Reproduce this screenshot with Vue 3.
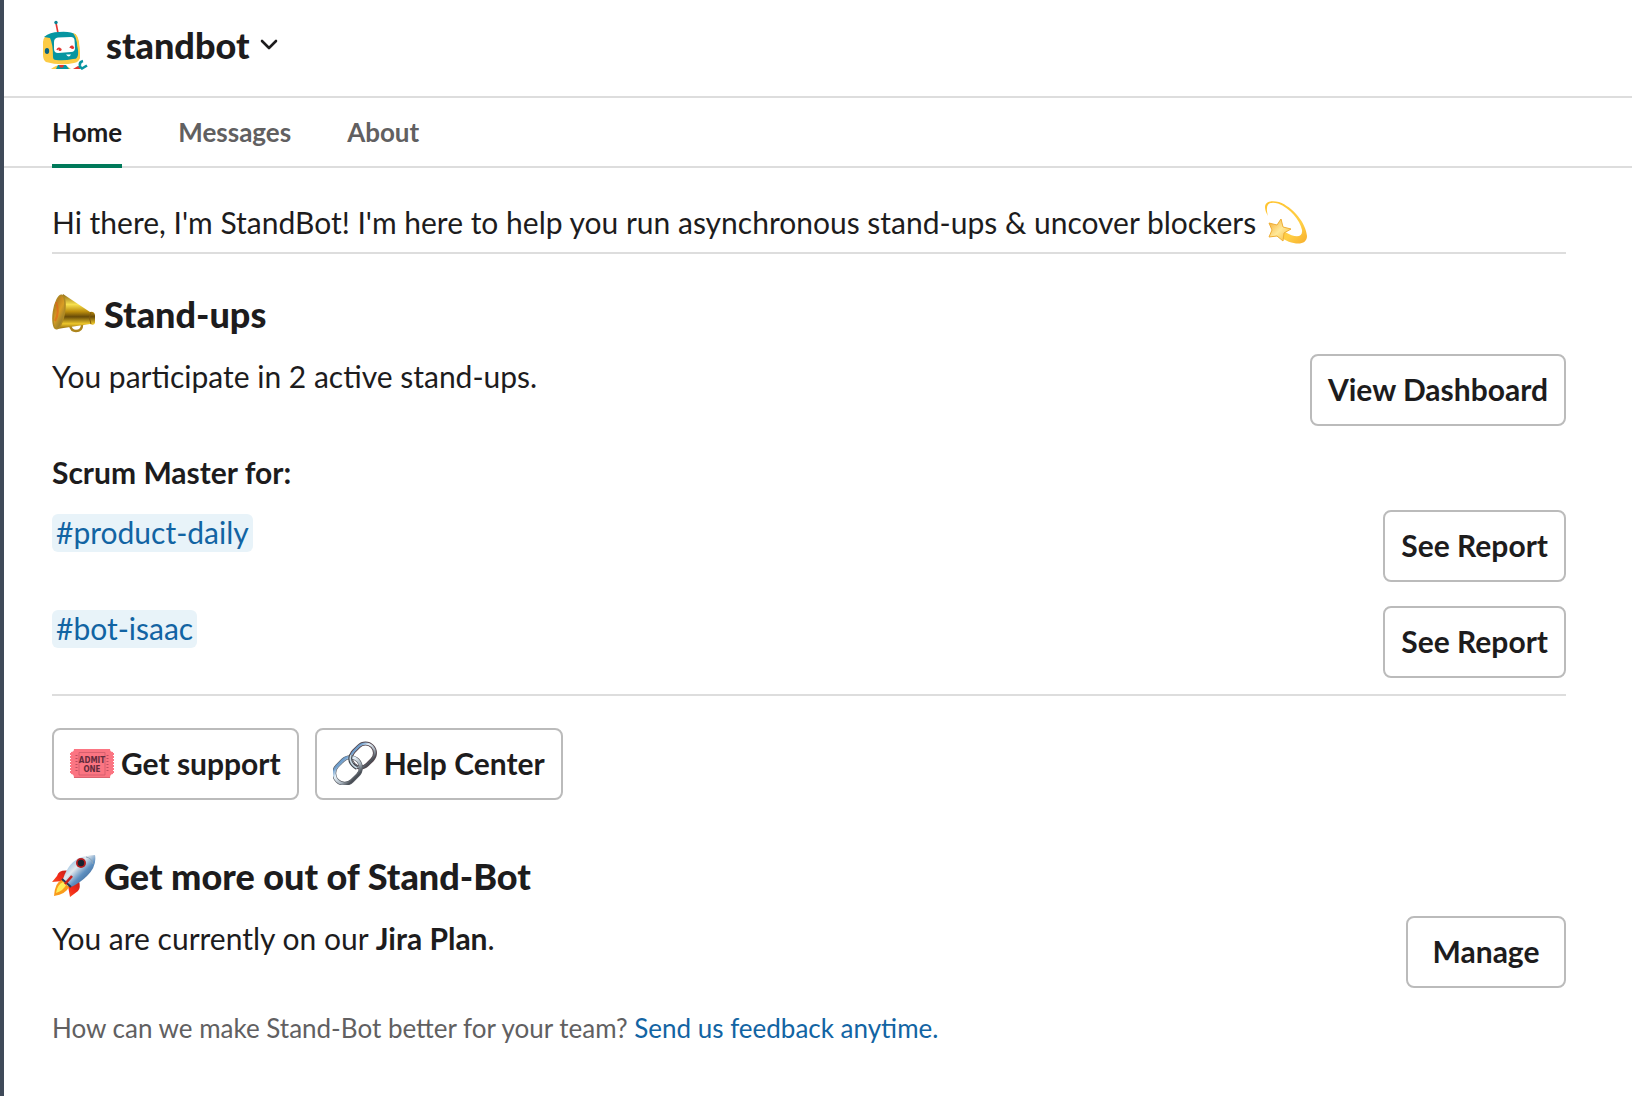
<script setup>
import { ref } from "vue";

const tabs = ['Home', 'Messages', 'About'];
const activeTab = ref('Home');
const channels = ref(['product-daily', 'bot-isaac']);
const plan = ref('Jira Plan');
</script>

<template>
    <div class="app">
        <header class="header">
            <svg class="avatar" viewBox="0 0 48 52" aria-hidden="true">
                <path d="M14 4 L16 14" stroke="#e5342f" stroke-width="1.6" />
                <circle cx="14" cy="3.500" r="1.700" fill="#0b7f91" />
                <path d="M9 50 q10-8 20 0z" fill="#fccb45" />
                <path d="M14 50 l2-4 h8 l3 4z" fill="#0695a1" />
                <path d="M17 46 h5 l-1 2.500 h-3z" fill="#e5342f" />
                <path d="M1 23 Q1 17 8 16 Q20 12 33 15 Q37 18 38 37 Q38 43 32 44 Q18 47 4 43 Q1 41 1 36z" fill="#fccb45" />
                <path d="M2 18 Q8 13 17 13 Q29 12 34 16 Q35 27 37 37 Q37 40 31 40 Q22 42 14 41 Q11 41 11 38 Q11 25 8 19z" fill="#0695a1" />
                <path d="M31 14 Q37 15 37.500 28 L38 39 Q36 42 34 40 Q37 37 36 29 Q35 19 31 14z" fill="#fccb45" />
                <path d="M12 23 Q12 19 16 18.500 L29 18 Q32 18 32.500 21 L33 29 Q33 33 29 33 L16 34 Q12 34 12 30z" fill="#fff" />
                <ellipse cx="5" cy="32" rx="2.200" ry="3" fill="#0b6380" />
                <path d="M15 31 q1-2.500 3-1.500 M28 29 q1-2.500 3-1.500" stroke="#e5342f" stroke-width="1.400" fill="none" />
                <circle cx="18" cy="30.500" r="1.600" fill="#e5342f" />
                <circle cx="30.500" cy="28.500" r="1.600" fill="#e5342f" />
                <path d="M24 35.500 h5 q-2 4-5 0z" fill="#fff" />
                <path d="M31 50 l5-3 3 1-1 2z" fill="#e5342f" />
                <path d="M37 47 l3 2.500 5-3M38 47 q-1-4 3-5" stroke="#0695a1" stroke-width="2.600" fill="none" />
            </svg>
            <button class="app-name">
                standbot
                <svg class="chevron" viewBox="0 0 18 12" aria-hidden="true">
                    <path d="M2 2 L9 9 L16 2" />
                </svg>
            </button>
        </header>

        <nav class="tabs">
            <button v-for="tab in tabs" :key="tab" class="tab" :class="{ active: tab === activeTab }" @click="activeTab = tab">{{ tab }}</button>
        </nav>

        <main class="content">
            <p class="intro">
                <span>Hi there, I'm StandBot! I'm here to help you run asynchronous stand-ups &amp; uncover blockers</span>
                <svg class="emoji" viewBox="0 0 44 44" aria-hidden="true">
                    <defs>
                        <linearGradient id="orbit" x1="0" y1="0" x2="1" y2="1">
                            <stop offset="0" stop-color="#ffc32e" />
                            <stop offset="0.700" stop-color="#ffcf45" />
                            <stop offset="1" stop-color="#f7ae2d" />
                        </linearGradient>
                        <linearGradient id="star" x1="0" y1="0" x2="1" y2="1">
                            <stop offset="0" stop-color="#f5a82c" />
                            <stop offset="0.500" stop-color="#ffe99a" />
                            <stop offset="1" stop-color="#f6b62c" />
                        </linearGradient>
                    </defs>
                    <path d="M4 16 C-3 4 3-1 15 2 C29 7 42 23 43 36 C43 46 29 46 14 36 L21 32 C31 38 39 38 38 30 C36 20 26 8 14 3.500 C4 1 1 5 4 16z" fill="url(#orbit)" />
                    <path d="M17 19 L19 27 27 29 20 33 19 41 13 36 5 37 8 30 5 23 13 25z" fill="url(#star)" stroke="#eeae35" stroke-width="1" stroke-linejoin="round" />
                </svg>
            </p>
            <hr>

            <h2>
                <svg class="emoji" viewBox="0 2 44 44" aria-hidden="true">
                    <defs>
                        <linearGradient id="horn" x1="0" y1="0" x2="0" y2="1">
                            <stop offset="0" stop-color="#8e6814" />
                            <stop offset="0.300" stop-color="#f7e04d" />
                            <stop offset="0.500" stop-color="#bd8e0d" />
                            <stop offset="0.650" stop-color="#684b08" />
                            <stop offset="0.850" stop-color="#edc62a" />
                            <stop offset="1" stop-color="#8a6109" />
                        </linearGradient>
                        <linearGradient id="bell" x1="0" y1="0" x2="1" y2="1">
                            <stop offset="0" stop-color="#a86b18" />
                            <stop offset="0.500" stop-color="#d99d24" />
                            <stop offset="1" stop-color="#77712f" />
                        </linearGradient>
                    </defs>
                    <path d="M18 35 q1 6 6 6 q6 0 6-6" fill="none" stroke="#ad851d" stroke-width="2.400" />
                    <path d="M11 4 L38 22 Q42 21 43 25 L43 33 Q42 36 38 34 L5 39z" fill="url(#horn)" />
                    <path d="M39 22 q-3 6 0 12" fill="none" stroke="#835c0b" stroke-width="1" />
                    <ellipse cx="7" cy="22" rx="5.500" ry="17" transform="rotate(9 7 22)" fill="url(#bell)" stroke="#af8924" stroke-width="1.500" />
                    <path d="M4 12 Q8 22 3 31" stroke="#e35f19" stroke-width="2" fill="none" opacity="0.600" />
                </svg>
                Stand-ups
            </h2>
            <section class="row">
                <p>You participate in 2 active stand-ups.</p>
                <button class="btn">View Dashboard</button>
            </section>

            <h3>Scrum Master for:</h3>
            <ul class="channels">
                <li v-for="c in channels" :key="c" class="row">
                    <p><a class="channel" :href="`#${c}`">#{{ c }}</a></p>
                    <button class="btn">See Report</button>
                </li>
            </ul>
            <hr>

            <div class="actions">
                <button class="btn">
                    <svg class="emoji" viewBox="0 0 44 44" aria-hidden="true">
                        <path d="M4 8 H40 Q40 11 43 11 V33 Q40 33 40 37 H4 Q4 33 1 33 V11 Q4 11 4 8z" fill="#fb7582" />
                        <path d="M1 12 V33 M43 12 V33" stroke="#fb7582" stroke-width="2" stroke-dasharray="2 1" />
                        <path d="M4 36.500 H40" stroke="#da6571" />
                        <path d="M9 11.500 H35 V34 H9z" fill="none" stroke="#cf5a69" stroke-width="0.800" />
                        <path d="M6.500 14 V32 M37.500 14 V32" stroke="#bd4f60" stroke-width="2" stroke-dasharray="1 2" />
                        <text x="22" y="21.500" text-anchor="middle" class="ticket-text">ADMIT</text>
                        <text x="22" y="30.500" text-anchor="middle" class="ticket-text">ONE</text>
                    </svg>
                    Get support
                </button>
                <button class="btn">
                    <svg class="emoji" viewBox="0 0 44 44" aria-hidden="true">
                        <defs>
                            <linearGradient id="steel" x1="0" y1="0" x2="0" y2="1">
                                <stop offset="0" stop-color="#6d9dcc" />
                                <stop offset="0.300" stop-color="#e6f0f7" />
                                <stop offset="0.700" stop-color="#a9b4be" />
                                <stop offset="1" stop-color="#4a4f56" />
                            </linearGradient>
                        </defs>
                        <g fill="none">
                            <rect x="17" y="5" width="26" height="19" rx="9.500" transform="rotate(-45 30 14.500)" stroke="#554850" stroke-width="4" />
                            <rect x="17" y="5" width="26" height="19" rx="9.500" transform="rotate(-45 30 14.500)" stroke="url(#steel)" stroke-width="2.200" />
                            <rect x="0" y="19" width="29" height="21" rx="10.500" transform="rotate(-45 14.500 29.500)" stroke="#5a5e66" stroke-width="4" />
                            <rect x="0" y="19" width="29" height="21" rx="10.500" transform="rotate(-45 14.500 29.500)" stroke="url(#steel)" stroke-width="2.800" />
                            <path d="M18 14 Q15 22 24 27" stroke="#40454c" stroke-width="3.800" />
                            <path d="M18 14 Q15 22 24 27" stroke="#c7d8e3" stroke-width="1.600" />
                        </g>
                    </svg>
                    Help Center
                </button>
            </div>

            <h2>
                <svg class="emoji" viewBox="0 0 44 44" aria-hidden="true">
                    <defs>
                        <linearGradient id="hull" x1="0" y1="0" x2="1" y2="1">
                            <stop offset="0.100" stop-color="#6caadc" />
                            <stop offset="0.400" stop-color="#e2e8ed" />
                            <stop offset="0.600" stop-color="#5d8fc0" />
                            <stop offset="0.950" stop-color="#2e4d78" />
                        </linearGradient>
                        <linearGradient id="fin" x1="1" y1="0" x2="0" y2="1">
                            <stop offset="0" stop-color="#9e1718" />
                            <stop offset="0.500" stop-color="#f32b19" />
                            <stop offset="1" stop-color="#ff8128" />
                        </linearGradient>
                    </defs>
                    <path d="M18 17 Q7 15 5 22 L0 28 L11 27z M27 27 Q29 34 26 37 L18 43 L16 32z" fill="url(#fin)" />
                    <path d="M10 26 Q3 28 2 42 Q14 40 17 33z" fill="#f99b1b" />
                    <path d="M11 28 Q5 31 4 39 Q12 36 14 31z" fill="#ffed58" />
                    <path d="M11 25 Q17 7 30 3 Q38 1 43 1 Q45 12 35 22 Q28 29 19 33z" fill="url(#hull)" />
                    <path d="M34 3 Q40 4 41 10" fill="none" stroke="#8ba5b8" stroke-width="1" />
                    <path d="M10 25 L19 33" stroke="#233a54" stroke-width="2" />
                    <path d="M20 22 L13 30" stroke="#c91e1c" stroke-width="2.500" />
                    <circle cx="29" cy="9" r="5" fill="#b51e20" />
                    <circle cx="29" cy="9" r="3.200" fill="#182330" />
                </svg>
                Get more out of Stand-Bot
            </h2>
            <section class="row">
                <p>You are currently on our <strong>{{ plan }}</strong>.</p>
                <button class="btn">Manage</button>
            </section>
            <p class="feedback">
                How can we make Stand-Bot better for your team?
                <a href="#feedback">Send us feedback anytime.</a>
            </p>
        </main>
    </div>
</template>

<style>
body {
    background: #fff;
}
</style>

<style scoped>
.app {
    box-sizing: border-box;
    min-height: 100vh;
    border-left: 4px solid #3f4a59;
    background: #fff;
    color: #1d1c1d;
    font-family: Lato, sans-serif;
    font-size: 30px;
    line-height: 44px;
}
p, h2, h3, ul {
    margin: 0;
    padding: 0;
}
button {
    font-family: inherit;
    color: inherit;
    cursor: pointer;
}
a {
    color: #1264a3;
    text-decoration: none;
}
a:hover {
    text-decoration: underline;
}
hr {
    height: 2px;
    margin: 0;
    border: 0;
    background: #dddddd;
}
.header {
    display: flex;
    align-items: center;
    gap: 16px;
    height: 90px;
    padding: 0 38px 6px;
    border-bottom: 2px solid #dddddd;
}
.avatar {
    width: 48px;
    height: 52px;
}
.app-name {
    display: flex;
    align-items: center;
    gap: 10px;
    padding: 0;
    border: 0;
    background: none;
    font-family: "Lato Black", Lato, sans-serif;
    font-size: 36px;
    font-weight: 900;
    line-height: 44px;
}
.chevron {
    width: 18px;
    height: 12px;
}
.chevron path {
    fill: none;
    stroke: #1d1c1d;
    stroke-width: 2.6;
    stroke-linecap: round;
    stroke-linejoin: round;
}
.tabs {
    display: flex;
    gap: 56px;
    padding: 0 48px;
    box-shadow: inset 0 -2px #dddddd;
}
.tab {
    height: 70px;
    padding: 2px 0 0;
    border: 0;
    border-bottom: 4px solid transparent;
    background: none;
    color: #616061;
    font-size: 26px;
    font-weight: 700;
}
.tab.active {
    border-color: #007a5a;
    color: #1d1c1d;
}
.content {
    padding: 32px 66px 32px 48px;
}
.emoji {
    flex: none;
    width: 44px;
    height: 44px;
}
.intro {
    display: flex;
    align-items: center;
    gap: 8px;
    padding-bottom: 8px;
}
.intro + hr {
    margin-bottom: 38px;
}
h2 {
    display: flex;
    align-items: center;
    gap: 8px;
    margin-bottom: 18px;
    font-family: "Lato Black", Lato, sans-serif;
    font-size: 36px;
    font-weight: 900;
    line-height: 44px;
}
h3 {
    margin: 24px 0 16px;
    font-size: 30px;
    font-weight: 700;
}
.row {
    display: flex;
    justify-content: space-between;
    align-items: flex-start;
    gap: 32px;
}
.channels {
    display: flex;
    flex-direction: column;
    gap: 24px;
    margin-bottom: 16px;
    list-style: none;
}
.channel {
    padding: 0 4px 2px;
    border-radius: 6px;
    background: #e8f3f9;
}
.btn {
    display: flex;
    align-items: center;
    justify-content: center;
    gap: 7px;
    min-width: 160px;
    height: 72px;
    padding: 0 16px 2px;
    border: 2px solid #bbbbbb;
    border-radius: 8px;
    background: #fff;
    font-size: 30px;
    font-weight: 700;
}
.btn:hover {
    background: #f8f8f8;
}
.actions {
    display: flex;
    gap: 16px;
    margin: 32px 0 54px;
}
.ticket-text {
    fill: #642b3c;
    font-family: "Liberation Sans Narrow", "DejaVu Sans Condensed", sans-serif;
    font-size: 8px;
    font-weight: 700;
}
.feedback {
    margin-top: 18px;
    color: #616061;
    font-size: 26px;
}
</style>
